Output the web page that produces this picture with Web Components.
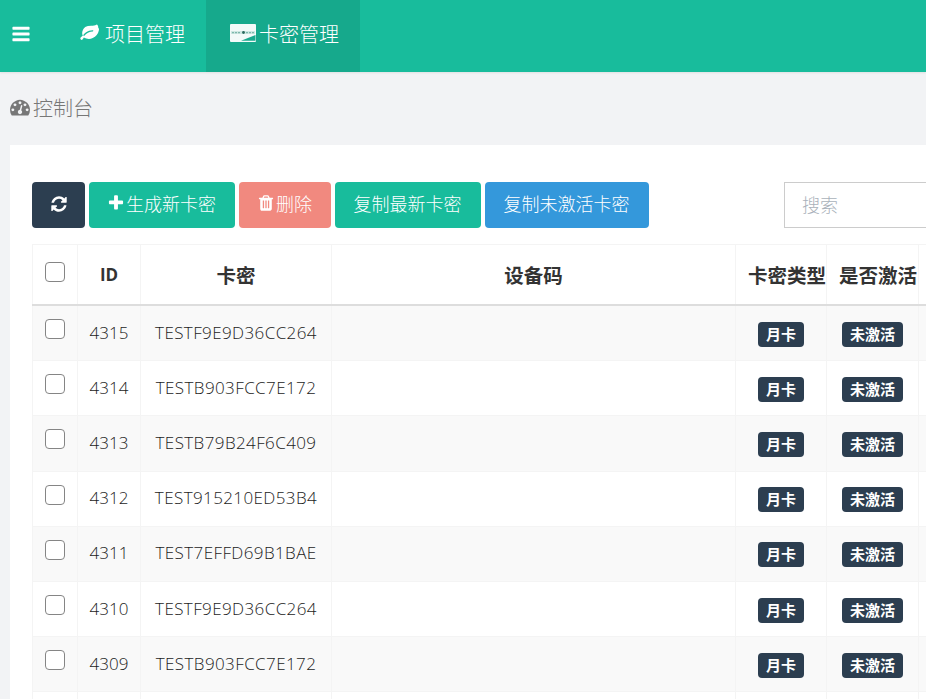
<!DOCTYPE html>
<html lang="zh">
<head>
<meta charset="utf-8">
<title>卡密管理</title>
<style>
  html, body { margin: 0; height: 100%; overflow: hidden; }
  body {
    background: #f2f3f5;
    color: #333;
    font-family: "Open Sans", "Noto Sans CJK SC", sans-serif;
  }
</style>
</head>
<body>
<app-navbar>
  <nav-tab icon="leaf">项目管理</nav-tab>
  <nav-tab icon="card" active>卡密管理</nav-tab>
</app-navbar>
<page-title>控制台</page-title>
<card-panel>
  <tool-bar>
    <tool-button kind="dark" icon="refresh" wide></tool-button>
    <tool-button kind="green" icon="plus" style="width:146px">生成新卡密</tool-button>
    <tool-button kind="red" icon="trash" style="width:92px">删除</tool-button>
    <tool-button kind="green" style="width:146px">复制最新卡密</tool-button>
    <tool-button kind="blue" style="width:164px">复制未激活卡密</tool-button>
    <search-box></search-box>
  </tool-bar>
  <card-table></card-table>
</card-panel>

<script>
const ICONS = {
  bars: 'M1664 1344v128q0 26-19 45t-45 19h-1408q-26 0-45-19t-19-45v-128q0-26 19-45t45-19h1408q26 0 45 19t19 45zm0-512v128q0 26-19 45t-45 19h-1408q-26 0-45-19t-19-45v-128q0-26 19-45t45-19h1408q26 0 45 19t19 45zm0-512v128q0 26-19 45t-45 19h-1408q-26 0-45-19t-19-45v-128q0-26 19-45t45-19h1408q26 0 45 19t19 45z',
  leaf: 'M1280 704q0-26-19-45t-45-19q-172 0-318 49.500t-259.500 134-235.500 219.500q-19 21-19 45 0 26 19 45t45 19q24 0 45-19 27-24 74-71t67-66q137-124 268.500-176t313.500-52q26 0 45-19t19-45zm512-198q0 95-20 193-46 224-184.500 383t-357.500 268q-169 85-346 85-117 0-226-37-59-20-175-75-30-15-41-15-16 0-39 32t-44 71-52 71-60 32q-30 0-51-11t-31-24-27-42l-11-21q-9-17-9-37 0-38 34-80t75-71.500 75-55 34-37.500q0-5-8-22-45-99-45-212 0-160 75-302t202-234q96-69 241-94t289-28 263-17 196-69q29-22 50-22 34 0 73 71 60 110 60 248z',
  refresh: 'M1639 1056q0 5-1 7-64 268-268 434.500t-478 166.500q-146 0-282.500-55t-243.500-157l-129 129q-19 19-45 19t-45-19-19-45v-448q0-26 19-45t45-19h448q26 0 45 19t19 45-19 45l-137 137q71 66 161 102t187 36q134 0 250-65t186-179q11-17 53-117 8-23 30-23h192q13 0 22.500 9.500t9.500 22.500zm25-800v448q0 26-19 45t-45 19h-448q-26 0-45-19t-19-45 19-45l138-138q-148-137-349-137-134 0-250 65t-186 179q-11 17-53 117-8 23-30 23h-199q-13 0-22.500-9.500t-9.500-22.500v-7q65-268 270-434.500t480-166.500q146 0 284 55.500t245 156.500l130-129q19-19 45-19t45 19 19 45z',
  plus: 'M1600 736v192q0 40-28 68t-68 28h-416v416q0 40-28 68t-68 28h-192q-40 0-68-28t-28-68v-416h-416q-40 0-68-28t-28-68v-192q0-40 28-68t68-28h416v-416q0-40 28-68t68-28h192q40 0 68 28t28 68v416h416q40 0 68 28t28 68z',
  trash: 'M704 1376v-704q0-14-9-23t-23-9h-64q-14 0-23 9t-9 23v704q0 14 9 23t23 9h64q14 0 23-9t9-23zm256 0v-704q0-14-9-23t-23-9h-64q-14 0-23 9t-9 23v704q0 14 9 23t23 9h64q14 0 23-9t9-23zm256 0v-704q0-14-9-23t-23-9h-64q-14 0-23 9t-9 23v704q0 14 9 23t23 9h64q14 0 23-9t9-23zm-544-992h448l-48-117q-7-9-17-11h-317q-10 2-17 11zm928 32v64q0 14-9 23t-23 9h-96v948q0 83-47 143.500t-113 60.500h-832q-66 0-113-58.500t-47-141.500v-952h-96q-14 0-23-9t-9-23v-64q0-14 9-23t23-9h309l70-167q15-37 54-63t79-26h320q40 0 79 26t54 63l70 167h309q14 0 23 9t9 23z',
  dashboard: 'M384 1152q0-53-37.500-90.500t-90.500-37.500-90.500 37.500-37.500 90.500 37.500 90.500 90.500 37.500 90.500-37.500 37.500-90.500zm192-448q0-53-37.500-90.500t-90.500-37.500-90.500 37.500-37.500 90.500 37.500 90.500 90.500 37.500 90.500-37.500 37.500-90.500zm428 481l101-382q6-26-7.500-48.500t-38.500-29.500-48 6.500-30 39.500l-101 382q-60 5-107 43.500t-63 98.500q-20 77 20 146t117 89 146-20 89-117q16-60-6-117t-72-91zm660-33q0-53-37.500-90.500t-90.500-37.500-90.500 37.500-37.500 90.500 37.500 90.500 90.500 37.500 90.500-37.500 37.500-90.500zm-640-640q0-53-37.500-90.500t-90.500-37.500-90.500 37.500-37.500 90.500 37.500 90.500 90.500 37.500 90.500-37.500 37.500-90.500zm448 192q0-53-37.500-90.500t-90.500-37.500-90.500 37.500-37.500 90.500 37.500 90.500 90.500 37.500 90.500-37.500 37.500-90.500zm320 448q0 261-141 483-19 29-54 29h-1402q-35 0-54-29-141-221-141-483 0-182 71-348t191-286 286-191 348-71 348 71 286 191 191 286 71 348z'
}

function faIcon (name, size) {
  return `<svg xmlns="http://www.w3.org/2000/svg" viewBox="0 0 1792 1792" width="${size}" height="${size}" fill="currentColor"><path d="${ICONS[name]}"/></svg>`
}

// the little "discover" card picture in the second tab
const CARD_ICON = `<svg xmlns="http://www.w3.org/2000/svg" viewBox="0 0 26 18" width="26" height="18">
  <rect width="26" height="18" rx="1" fill="#f3faf9"/>
  <rect x="1" y="7" width="24" height="3" fill="#cfe8e3"/>
  <path d="M2 8h2v1.200H2zM5 8h2v1.200H5zM8 8h2v1.200H8zM16 8h2v1.200h-2zM19 8h2v1.200h-2zM22 8h2v1.200h-2z" fill="#7fb8ad"/>
  <circle cx="13.500" cy="8.500" r="1.400" fill="#2c6a5e"/>
  <path d="M11 16.800 25.500 11v5.800z" fill="#1aa98e"/>
</svg>`

class AppNavbar extends HTMLElement {
  connectedCallback () {
    this.attachShadow({ mode: 'open' }).innerHTML = `
      <style>
        :host {
          display: flex;
          height: 72px;
          background: #18bc9c;
          color: #fff;
          box-shadow: 0 1px 2px rgba(0,0,0,.08);
        }
        .toggle {
          width: 60px;
          display: flex;
          align-items: center;
          padding: 0 0 4px 11px;
          box-sizing: border-box;
        }
      </style>
      <div class="toggle">${faIcon('bars', 20)}</div>
      <slot></slot>`
  }
}

class NavTab extends HTMLElement {
  connectedCallback () {
    const icon = this.getAttribute('icon') === 'card' ? CARD_ICON : faIcon('leaf', 20)
    this.attachShadow({ mode: 'open' }).innerHTML = `
      <style>
        :host {
          display: flex;
          align-items: center;
          gap: 6px;
          width: 146px;
          height: 72px;
          box-sizing: border-box;
          padding: 0 0 6px 19px;
          font-size: 20px;
          font-weight: 300;
        }
        :host([active]) {
          background: #16a98c;
          width: 154px;
          gap: 3px;
          padding: 0 0 6px 24px;
        }
        svg { flex: none; }
      </style>
      ${icon}<slot></slot>`
  }
}

class PageTitle extends HTMLElement {
  connectedCallback () {
    this.attachShadow({ mode: 'open' }).innerHTML = `
      <style>
        :host {
          display: flex;
          align-items: center;
          gap: 3px;
          height: 73px;
          box-sizing: border-box;
          padding: 0 0 3px 10px;
          color: #777;
          font-size: 20px;
          font-weight: 300;
        }
      </style>
      ${faIcon('dashboard', 20)}<slot></slot>`
  }
}

class CardPanel extends HTMLElement {
  connectedCallback () {
    this.attachShadow({ mode: 'open' }).innerHTML = `
      <style>
        :host {
          display: block;
          margin-left: 10px;
          width: 1100px;
          padding: 37px 22px 0;
          box-sizing: border-box;
          background: #fff;
          min-height: 554px;
        }
      </style>
      <slot></slot>`
  }
}

class ToolBar extends HTMLElement {
  connectedCallback () {
    this.attachShadow({ mode: 'open' }).innerHTML = `
      <style>
        :host {
          display: flex;
          gap: 4px;
          height: 46px;
          margin-bottom: 16px;
        }
      </style>
      <slot></slot>`
  }
}

const BUTTON_COLORS = { dark: '#2c3e50', green: '#18bc9c', red: '#f1897f', blue: '#3498db' }

class ToolButton extends HTMLElement {
  connectedCallback () {
    const name = this.getAttribute('icon')
    const bg = BUTTON_COLORS[this.getAttribute('kind')]
    this.attachShadow({ mode: 'open' }).innerHTML = `
      <style>
        :host {
          display: flex;
          align-items: center;
          justify-content: center;
          gap: 1px;
          box-sizing: border-box;
          height: 46px;
          padding: 0 1px 4px 0;
          border-radius: 4px;
          background: ${bg};
          color: #fff;
          font-size: 18px;
          font-weight: 300;
        }
        :host([wide]) { width: 53px; padding: 0 0 2px; }
      </style>
      ${name ? faIcon(name, 18) : ''}<slot></slot>`
  }
}

class SearchBox extends HTMLElement {
  connectedCallback () {
    this.attachShadow({ mode: 'open' }).innerHTML = `
      <style>
        :host { display: block; margin-left: 131px; width: 260px; }
        input {
          display: block;
          width: 100%;
          height: 46px;
          box-sizing: border-box;
          padding: 0 17px;
          border: 1px solid #ccc;
          outline: none;
          font: 300 18px "Open Sans", "Noto Sans CJK SC", sans-serif;
        }
        input::placeholder { color: #a9b1ba; opacity: 1; }
      </style>
      <input type="text" placeholder="搜索">`
  }
}

const ROWS = [
  [4315, 'TESTF9E9D36CC264'],
  [4314, 'TESTB903FCC7E172'],
  [4313, 'TESTB79B24F6C409'],
  [4312, 'TEST915210ED53B4'],
  [4311, 'TEST7EFFD69B1BAE'],
  [4310, 'TESTF9E9D36CC264'],
  [4309, 'TESTB903FCC7E172']
]

class CardTable extends HTMLElement {
  connectedCallback () {
    const rows = ROWS.map(([id, code]) => `
      <tr>
        <td class="check"><input type="checkbox"></td>
        <td class="text">${id}</td>
        <td class="text code">${code}</td>
        <td></td>
        <td><span class="badge">月卡</span></td>
        <td><span class="badge">未激活</span></td>
        <td></td>
      </tr>`).join('')
    // the row after 4309 only shows its top edge in the window, so it stays empty
    const tail = '<tr><td></td><td></td><td></td><td></td><td></td><td></td><td></td></tr>'
    this.attachShadow({ mode: 'open' }).innerHTML = `
      <style>
        :host { display: block; }
        table {
          table-layout: fixed;
          border-collapse: collapse;
          width: 1000px;
        }
        th, td {
          border: 1px solid #f4f4f4;
          padding: 0;
          text-align: center;
          white-space: nowrap;
          overflow: hidden;
        }
        th {
          height: 59px;
          border-bottom: 2px solid #ddd;
          font-size: 19.5px;
          font-weight: 700;
        }
        th.id { font-size: 17px; }
        th.flush { text-align: left; padding-left: 12px; overflow: visible; }
        td {
          height: 54.2px;
          font-size: 17px;
          color: #444;
        }
        td.text { padding-bottom: 2px; height: 52.2px; font-weight: 300; color: #1c1c1c; }
        td.code { letter-spacing: .4px; }
        tbody tr:nth-child(odd) { background: #f9f9f9; }
        input {
          appearance: none;
          display: block;
          width: 20px;
          height: 20px;
          margin: 0 auto;
          box-sizing: border-box;
          border: 1.5px solid #858585;
          border-radius: 4px;
          background: #fff;
        }
        .check { vertical-align: top; padding-top: 13px; height: 41.2px; }
        th.check { vertical-align: top; padding-top: 17px; height: 42px; }
        .badge {
          display: inline-block;
          background: #2c3e50;
          color: #fff;
          font-size: 15px;
          font-weight: 700;
          line-height: 25px;
          padding: 0 8px;
          border-radius: 4px;
          position: relative;
          top: 1px;
        }
      </style>
      <table>
        <colgroup>
          <col style="width:45px"><col style="width:63px"><col style="width:191px">
          <col style="width:404px"><col style="width:91px"><col style="width:92px"><col>
        </colgroup>
        <thead>
          <tr>
            <th class="check"><input type="checkbox"></th>
            <th class="id">ID</th>
            <th>卡密</th>
            <th>设备码</th>
            <th class="flush">卡密类型</th>
            <th class="flush">是否激活</th>
            <th></th>
          </tr>
        </thead>
        <tbody>${rows}${tail}</tbody>
      </table>`
  }
}

customElements.define('app-navbar', AppNavbar)
customElements.define('nav-tab', NavTab)
customElements.define('page-title', PageTitle)
customElements.define('card-panel', CardPanel)
customElements.define('tool-bar', ToolBar)
customElements.define('tool-button', ToolButton)
customElements.define('search-box', SearchBox)
customElements.define('card-table', CardTable)
</script>
</body>
</html>
